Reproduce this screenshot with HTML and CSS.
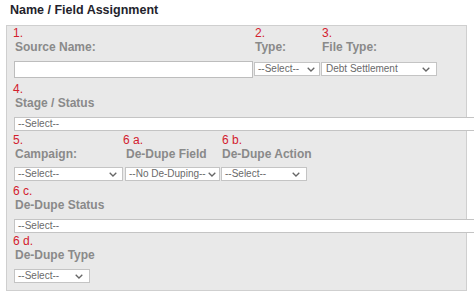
FILE: index.html
```html
<!DOCTYPE html>
<html>
<head>
<meta charset="utf-8">
<link rel="stylesheet" href="styles.css">
</head>
<body>
<h1 class="title">Name / Field Assignment</h1>
<div class="panel">
  <div class="row r1">
    <div class="field f-source">
      <div class="num first">1.</div>
      <div class="lbl">Source Name:</div>
      <div class="textbox"></div>
    </div>
    <div class="field f-type">
      <div class="num">2.</div>
      <div class="lbl">Type:</div>
      <div class="sel s-type"><span>--Select--</span><svg class="chev" width="8" height="5" viewBox="0 0 8 5"><path d="M0.7 0.7 L4 4 L7.3 0.7" fill="none" stroke="#666" stroke-width="1.3"/></svg></div>
    </div>
    <div class="field f-file">
      <div class="num">3.</div>
      <div class="lbl">File Type:</div>
      <div class="sel s-file"><span>Debt Settlement</span><svg class="chev" width="8" height="5" viewBox="0 0 8 5"><path d="M0.7 0.7 L4 4 L7.3 0.7" fill="none" stroke="#666" stroke-width="1.3"/></svg></div>
    </div>
  </div>

  <div class="row r2">
    <div class="field">
      <div class="num first">4.</div>
      <div class="lbl">Stage / Status</div>
      <div class="sel s-wide"><span>--Select--</span></div>
    </div>
  </div>

  <div class="row r3">
    <div class="field f-camp">
      <div class="num first">5.</div>
      <div class="lbl">Campaign:</div>
      <div class="sel s-camp"><span>--Select--</span><svg class="chev" width="8" height="5" viewBox="0 0 8 5"><path d="M0.7 0.7 L4 4 L7.3 0.7" fill="none" stroke="#666" stroke-width="1.3"/></svg></div>
    </div>
    <div class="field f-ddf">
      <div class="num">6 a.</div>
      <div class="lbl">De-Dupe Field</div>
      <div class="sel s-ddf"><span>--No De-Duping--</span><svg class="chev" width="8" height="5" viewBox="0 0 8 5"><path d="M0.7 0.7 L4 4 L7.3 0.7" fill="none" stroke="#666" stroke-width="1.3"/></svg></div>
    </div>
    <div class="field f-dda">
      <div class="num">6 b.</div>
      <div class="lbl">De-Dupe Action</div>
      <div class="sel s-dda"><span>--Select--</span><svg class="chev" width="8" height="5" viewBox="0 0 8 5"><path d="M0.7 0.7 L4 4 L7.3 0.7" fill="none" stroke="#666" stroke-width="1.3"/></svg></div>
    </div>
  </div>

  <div class="row r4">
    <div class="field">
      <div class="num first">6 c.</div>
      <div class="lbl">De-Dupe Status</div>
      <div class="sel s-wide"><span>--Select--</span></div>
    </div>
  </div>

  <div class="row r5">
    <div class="field">
      <div class="num first">6 d.</div>
      <div class="lbl">De-Dupe Type</div>
      <div class="sel s-ddt"><span>--Select--</span><svg class="chev" width="8" height="5" viewBox="0 0 8 5"><path d="M0.7 0.7 L4 4 L7.3 0.7" fill="none" stroke="#666" stroke-width="1.3"/></svg></div>
    </div>
  </div>
</div>
</body>
</html>
```

FILE: styles.css
```css
html, body {
  margin: 0;
  padding: 0;
  background: #ffffff;
  width: 474px;
  height: 298px;
  overflow: hidden;
  font-family: "Liberation Sans", Arial, sans-serif;
}

.title {
  margin: 3px 0 7px 10px;
  font-size: 12.5px;
  line-height: 15px;
  font-weight: bold;
  color: #241f2c;
}

.panel {
  margin-left: 6px;
  width: 461px;
  box-sizing: border-box;
  background: #e9e9e9;
  border: 1px solid #cfcfcf;
  padding: 0 0 7px 7px;
}

.row {
  display: flex;
  align-items: flex-start;
}

.r2 { margin-top: 4px; }
.r3 { margin-top: 2px; }
.r4 { margin-top: 3px; }
.r5 { margin-top: 1px; }

.field {
  display: flex;
  flex-direction: column;
  align-items: flex-start;
}

.f-source { width: 240px; }
.f-type { width: 67px; }
.f-file { width: 116px; }
.f-camp { width: 111px; }
.f-ddf { width: 96px; }
.f-dda { width: 90px; }

.num {
  font-size: 12px;
  line-height: 14px;
  color: #d3202d;
  margin-left: 1px;
  white-space: nowrap;
}

.num.first { margin-left: -1px; }
.f-ddf .num { margin-left: -2px; }

.lbl {
  font-size: 12px;
  line-height: 14px;
  font-weight: bold;
  color: #8a8a8a;
  margin: 0 0 7px 1px;
  white-space: nowrap;
}

.r3 .lbl { margin-bottom: 6px; }

.textbox {
  width: 239px;
  height: 17px;
  box-sizing: border-box;
  background: #fff;
  border: 1px solid #bdbdbd;
}

.sel {
  height: 14px;
  box-sizing: border-box;
  background: #fff;
  border: 1px solid #c4c4c4;
  display: flex;
  align-items: center;
  justify-content: space-between;
  padding: 0 4px 0 3px;
  font-size: 10px;
  line-height: 12px;
  color: #6a6a6a;
  white-space: nowrap;
  overflow: hidden;
}

.chev { flex: none; }

.r1 .sel { margin-top: 1px; }

.s-type { width: 66px; }
.s-file { width: 116px; padding-left: 4px; padding-right: 6px; }
.s-wide { width: 470px; }
.s-camp { width: 109px; padding-right: 5px; }
.s-ddf { width: 95px; padding-right: 3px; }
.s-dda { width: 86px; padding-right: 6px; }
.s-ddt { width: 76px; padding-right: 6px; }
```
